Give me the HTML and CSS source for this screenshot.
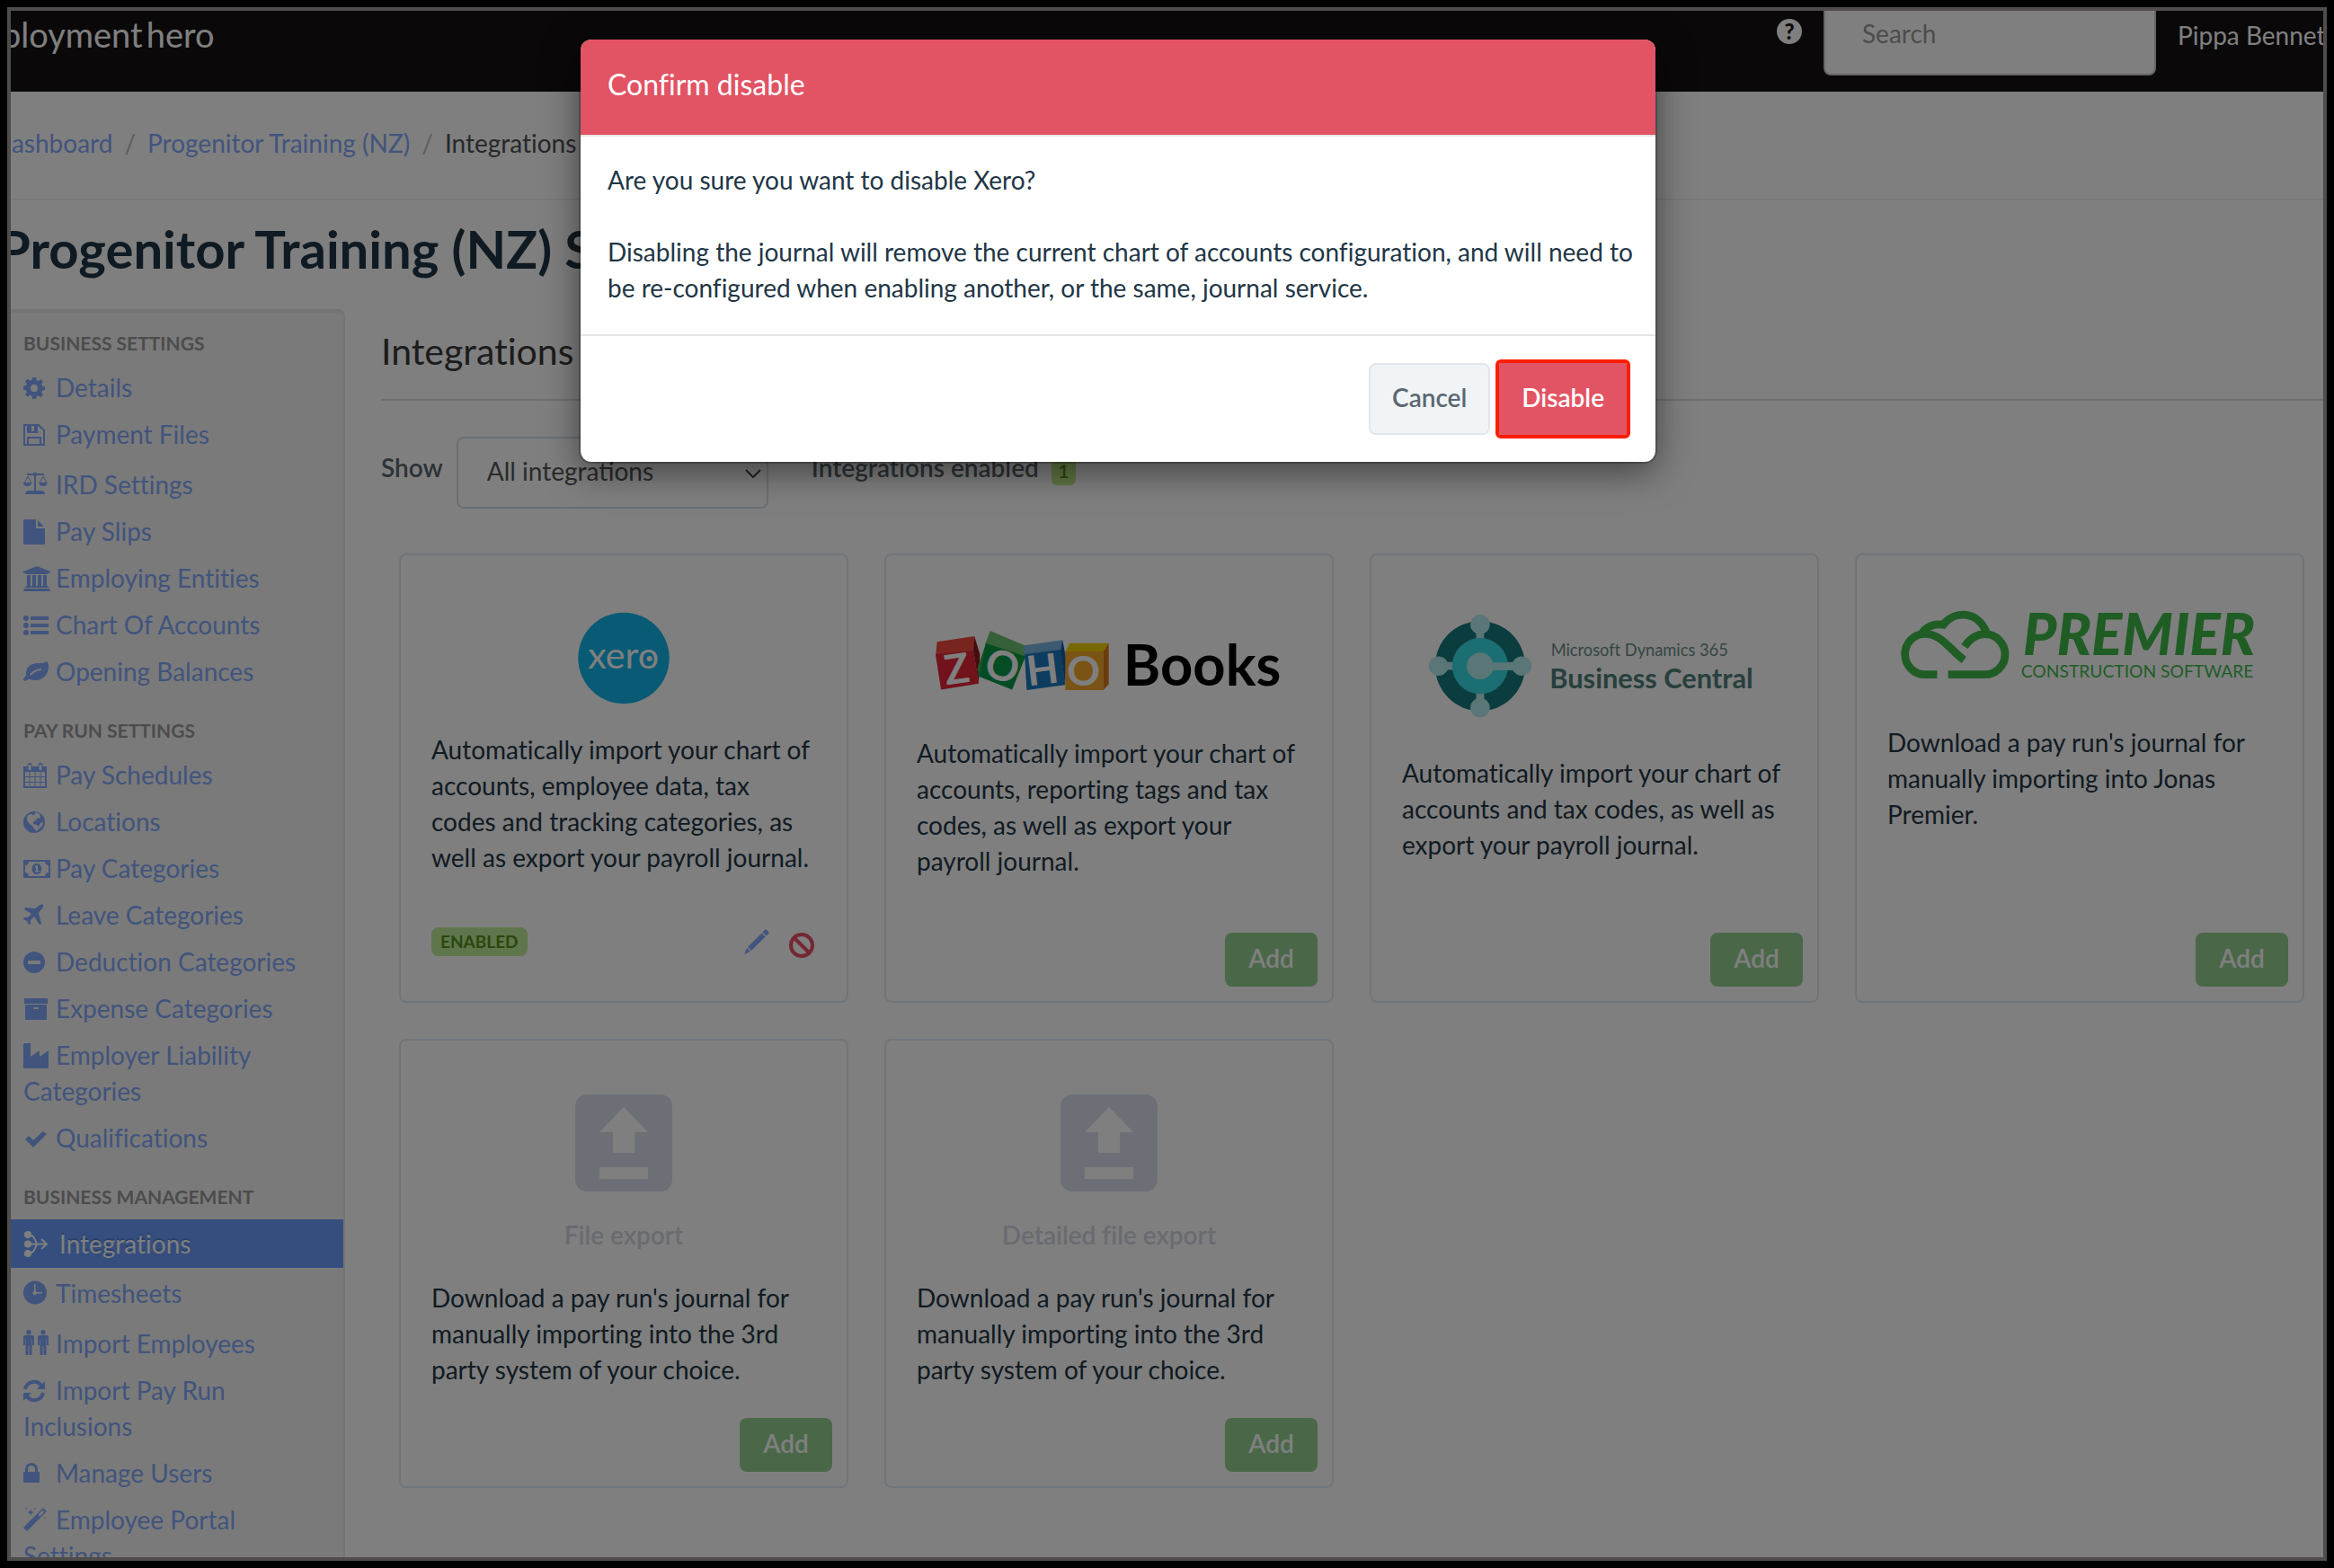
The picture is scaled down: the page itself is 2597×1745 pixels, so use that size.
FILE: index.html
```html
<!DOCTYPE html>
<html lang="en">
<head>
    <meta charset="utf-8">
    <title>Integrations</title>
    <link rel="stylesheet" href="styles.css">
</head>
<body>
<div class="frame">

    <header class="navbar">
        <a class="brand" href="#"><span>ployment</span><span>hero</span></a>
        <div class="nav-right">
            <a href="#" class="help" aria-label="Help">?</a>
            <input type="text" class="search" placeholder="Search" aria-label="Search">
            <a href="#" class="user">Pippa Bennett</a>
        </div>
    </header>

    <nav class="breadcrumb">
        <a href="#">Dashboard</a><span class="sep">/</span>
        <a href="#">Progenitor Training (NZ)</a><span class="sep">/</span>
        <span>Integrations</span>
    </nav>

    <h1>Progenitor Training (NZ) Settings</h1>

    <div class="columns">
        <!-- Settings menu -->
        <nav class="sidebar">
            <h3>Business Settings</h3>
            <ul>
                <li><a href="#"><svg class="icon" viewBox="0 0 30 30"><path fill-rule="evenodd" d="M10 4h4l.6 3.2 2 .9 2.8-1.9 2.6 2.6-1.8 2.7.8 2.1 3 .5v4l-3 .6-.8 2 1.8 2.7-2.6 2.6-2.8-1.8-2 .8L14 28h-4l-.6-3.5-2-.8-2.8 1.8L2 22.900l1.800-2.700-.8-2L0 17.600v-4l3-.5.8-2.100L2 8.300l2.600-2.600 2.800 1.900 2-.9zM12 11.800a4.200 4.200 0 1 0 0 8.400 4.200 4.200 0 0 0 0-8.400z"/></svg>Details</a></li>
                <li><a href="#"><svg class="icon" viewBox="0 0 30 30"><g fill="none" stroke="currentColor" stroke-width="2"><path d="M1 5h16l6 6v16H1z"/><path d="M5 27v-8h14v8M5 5v8h10V5"/></g><path d="M5 5h4v8H5zM12 6h2v6h-2z"/></svg>Payment Files</a></li>
                <li class="tall"><a href="#"><svg class="icon" viewBox="0 0 30 30"><g fill="none" stroke="currentColor"><path stroke-width="2" d="M4 4h19M13 4v20"/><path d="M1 14l4-8 4 8M18 14l4-8 4 8"/></g><circle cx="13" cy="4" r="2.300"/><path d="M0 13h9c0 3-2 4-4.500 4S0 16 0 13zM17.500 13h9c0 3-2 4-4.500 4s-4.500-1-4.500-4zM2 26c0-3 2-4 4-4h14c2 0 4 1 4 4z"/></svg>IRD Settings</a></li>
                <li><a href="#"><svg class="icon" viewBox="0 0 30 30"><path d="M1 2h13v10h10v17a1 1 0 0 1-1 1H1a1 1 0 0 1-1-1V3a1 1 0 0 1 1-1zM16 3l7 7h-7z"/></svg>Pay Slips</a></li>
                <li><a href="#"><svg class="icon" viewBox="0 0 30 30"><path d="M15 2l15 6v2H27v1H3v-1H0V8zM4 12h4v12h2V12h4v12h2V12h4v12h2V12h4v12h1l1 2H2l1-2h1zM1 27h28l1 3H0z"/></svg>Employing Entities</a></li>
                <li><a href="#"><svg class="icon" viewBox="0 0 30 30"><circle cx="3" cy="8" r="3"/><circle cx="3" cy="16" r="3"/><circle cx="3" cy="24" r="3"/><path d="M8 6h20v4H8zM8 14h20v4H8zM8 22h20v4H8z"/></svg>Chart Of Accounts</a></li>
                <li><a href="#"><svg class="icon" viewBox="0 0 30 30"><path fill-rule="evenodd" d="M26 4c2 2 2 4 2 6 0 10-8 16-16 15-3 0-5-2-6-1l-4 2-2-1c0-3 3-4 3-6C2 10 9 6 16 6c4 0 8 0 10-2zM20 12c-6 0-10 3-13 7l1 1c3-3 7-6 12-6z"/></svg>Opening Balances</a></li>
            </ul>

            <h3>Pay Run Settings</h3>
            <ul>
                <li><a href="#"><svg class="icon" viewBox="0 0 30 30"><path fill="none" stroke="currentColor" stroke-width="2" d="M1 7h24v22H1z"/><path d="M0 6h26v6H0z"/><path stroke="currentColor" d="M7 12v17M13 12v17M19 12v17M1 17.500h24M1 23.500h24"/><path stroke="currentColor" stroke-width="5" stroke-linecap="round" d="M7 4.500v3M19 4.500v3"/><path class="gap-line" d="M7 4v6M19 4v6"/></svg>Pay Schedules</a></li>
                <li><a href="#"><svg class="icon" viewBox="0 0 30 30"><path fill-rule="evenodd" d="M12 4a12 12 0 1 0 0 24 12 12 0 0 0 0-24zM5 8l3-1 3 1 2-1 0-2 4 1 2 3-1 3-2-1-2 3-3 2 0 2 4 1 2 3-1 3-1 1-3-3-2-3-3-2-3-4 0-3zM20 16l2 0-1 4-4 4-1 0 1-4z"/></svg>Locations</a></li>
                <li><a href="#"><svg class="icon" viewBox="0 0 30 30"><path fill-rule="evenodd" d="M0 6h30v20H0zM6 8c0 2-2 4-4 4v8c2 0 4 2 4 4h18c0-2 2-4 4-4v-8c-2 0-4-2-4-4zM15 10c7 0 7 12 0 12s-7-12 0-12zM13 13v1.500h1V18h-1v1.500h4.500V18H16v-6h-1.500z"/></svg>Pay Categories</a></li>
                <li><a href="#"><svg class="icon" viewBox="0 0 30 30"><path d="M22 4c1 2-1 4-3 6l-2 3 3 12-2 1-6-9-4 4v4l-2 1-2-4-4-2 1-2h4l4-4-8-5 1-2 11 1 3-2c2-2 4-3 6-2z"/></svg>Leave Categories</a></li>
                <li><a href="#"><svg class="icon" viewBox="0 0 30 30"><path fill-rule="evenodd" d="M12 4a12 12 0 1 0 0 24 12 12 0 0 0 0-24zM6 14h12a1 1 0 0 1 1 1v2a1 1 0 0 1-1 1H6a1 1 0 0 1-1-1v-2a1 1 0 0 1 1-1z"/></svg>Deduction Categories</a></li>
                <li><a href="#"><svg class="icon" viewBox="0 0 30 30"><path fill-rule="evenodd" d="M1 4h26v6H1zM2 11h24v17H2zM12 14a1 1 0 0 0 0 2h4a1 1 0 0 0 0-2z"/></svg>Expense Categories</a></li>
                <li><a href="#"><svg class="icon" viewBox="0 0 30 30"><path d="M1 2h7v15l10-7v7l10-7v20H0V3z"/></svg>Employer Liability Categories</a></li>
                <li><a href="#"><svg class="icon" viewBox="0 0 30 30"><path d="M2 17l4-4 5 5L22 8l4 3-15 15z"/></svg>Qualifications</a></li>
            </ul>

            <h3>Business Management</h3>
            <ul>
                <li class="active"><a href="#"><svg class="icon" viewBox="0 0 30 30"><circle cx="5" cy="5" r="4"/><circle cx="5" cy="15.500" r="4"/><circle cx="5" cy="26" r="4"/><path fill="none" stroke="currentColor" stroke-width="2" d="M5 5c7 0 8 6 10 10.500C13 20 12 26 5 26M5 15.500h20M20 10l6 5.500-6 5.500"/></svg>Integrations</a></li>
                <li><a href="#"><svg class="icon" viewBox="0 0 30 30"><path fill-rule="evenodd" d="M13 1.500a13 13 0 1 0 0 26 13 13 0 0 0 0-26zM12 5v7.500a2.400 2.400 0 1 0 3 3h6v-1.500h-6l-1.500-1.500V5z"/></svg>Timesheets</a></li>
                <li class="tall"><a href="#"><svg class="icon" viewBox="0 0 30 30"><g id="man"><circle cx="6" cy="2.700" r="2.600"/><path d="M2 6h8a2 2 0 0 1 2 2v9h-2v-7H9.500v18h-3V18h-1v10h-3V10H2v7H0V8a2 2 0 0 1 2-2z"/></g><use href="#man" x="16"/></svg>Import Employees</a></li>
                <li><a href="#"><svg class="icon" viewBox="0 0 30 30"><path fill="none" stroke="currentColor" stroke-width="4" d="M2 14c2-9 13-11 18-4M22 18c-2 9-13 11-18 4"/><path d="M24 5v9h-9zM0 27v-9h9z"/></svg>Import Pay Run Inclusions</a></li>
                <li><a href="#"><svg class="icon" viewBox="0 0 30 30"><path fill="none" stroke="currentColor" stroke-width="3" d="M3.500 16v-5a5.500 5.500 0 0 1 11 0v5"/><rect y="14" width="18" height="12" rx="1"/></svg>Manage Users</a></li>
                <li><a href="#"><svg class="icon" viewBox="0 0 30 30"><path fill-rule="evenodd" d="M22 2l4 4L4 28l-4-4zM21.500 4.500l-5 5 2 2 5-5zM8 3l1 3 3 1-3 1-1 3-1-3-3-1 3-1zM3 2l1 1-1 1-1-1zM13 2l1 1-1 1-1-1zM24 12l1 1-1 1-1-1z"/></svg>Employee Portal Settings</a></li>
            </ul>
        </nav>

        <main>
            <h2>Integrations</h2>

            <div class="filters">
                <label for="show">Show</label>
                <div class="select-wrap">
                    <select id="show">
                        <option>All integrations</option>
                    </select>
                    <svg class="chevron" viewBox="0 0 18 10"><path d="M1 1l8 8 8-8"/></svg>
                </div>
                <span class="count-label">Integrations enabled</span>
                <span class="count">1</span>
            </div>

            <div class="cards">
                <section class="card">
                    <svg class="logo" viewBox="148 231 1266 314" role="img" aria-label="Xero">
                        <circle cx="781" cy="392" r="150" fill="#13b5ea"/>
                        <text x="780" y="425" class="xero-text" text-anchor="middle">xero</text>
                        <circle cx="866" cy="394" r="9" fill="#fff"/>
                    </svg>
                    <p>Automatically import your chart of accounts, employee data, tax codes and tracking categories, as well as export your payroll journal.</p>
                    <div class="card-status">
                        <span class="enabled">ENABLED</span>
                        <a href="#" class="edit" aria-label="Edit"><svg viewBox="0 0 28 28"><path d="M0 28l3-7 4 4zM4 20L19.500 4.500l4 4L8 24zM20.500 3.500L24 0l4 4-3.500 3.500z"/></svg></a>
                        <a href="#" class="disable" aria-label="Disable"><svg viewBox="0 0 28 28"><circle cx="14" cy="14" r="12"/><path d="M5.500 5.500l17 17"/></svg></a>
                    </div>
                </section>

                <section class="card">
                    <svg class="logo" viewBox="148 231 1266 325" role="img" aria-label="Zoho Books">
                        <path fill="#f0483e" d="M215 338L338 320 337 372 210 386z"/>
                        <path fill="#e42537" d="M210 380L335 368 352 476 228 496z"/>
                        <path fill="#8c1a1e" d="M338 320L356 380 352 476 335 370z"/>
                        <path fill="#6cc070" d="M390 302L508 352 503 390 374 345z"/>
                        <path fill="#4aa850" d="M390 302L376 346 352 452 348 425z"/>
                        <path fill="#089949" d="M375 343L506 386 462 496 352 452z"/>
                        <path fill="#78b4e4" d="M500 351L628 332 622 366 503 380z"/>
                        <path fill="#1c78be" d="M503 379L623 364 636 480 510 497z"/>
                        <path fill="#145a9c" d="M628 332L641 400 636 482 622 364z"/>
                        <path fill="#f0d000" d="M652 343H780L762 372H637z"/>
                        <path fill="#f5a828" d="M637 370H762V497H637z"/>
                        <path fill="#d87818" d="M780 343V478L762 497V371z"/>
                        <text class="zoho-text" x="280" y="476" text-anchor="middle" transform="rotate(-8 280 428)">Z</text>
                        <text class="zoho-text" x="430" y="466" text-anchor="middle" transform="rotate(18 430 418)">O</text>
                        <text class="zoho-text" x="562" y="478" text-anchor="middle" transform="rotate(-7 562 430)">H</text>
                        <text class="zoho-text" x="697" y="482" text-anchor="middle">O</text>
                        <text class="books-text" x="828" y="482">Books</text>
                    </svg>
                    <p>Automatically import your chart of accounts, reporting tags and tax codes, as well as export your payroll journal.</p>
                    <button type="button" class="add">Add</button>
                </section>

                <section class="card">
                    <svg class="logo" viewBox="148 231 1266 390" role="img" aria-label="Microsoft Dynamics 365 Business Central">
                        <circle cx="405" cy="418" r="148" fill="#16787c"/>
                        <g stroke="#b4ecec" stroke-width="26"><path d="M405 280V556M268 418H542"/></g>
                        <circle cx="405" cy="418" r="92" fill="#36dce4"/>
                        <path stroke="#b4ecec" stroke-width="26" d="M405 419H542"/>
                        <g fill="#b4ecec">
                            <circle cx="405" cy="418" r="44"/>
                            <circle cx="405" cy="281" r="32"/>
                            <circle cx="405" cy="555" r="32"/>
                            <circle cx="268" cy="418" r="32"/>
                            <circle cx="542" cy="418" r="32"/>
                        </g>
                        <text class="dyn-small" x="638" y="386">Microsoft Dynamics 365</text>
                        <text class="dyn-big" x="634" y="490">Business Central</text>
                    </svg>
                    <p>Automatically import your chart of accounts and tax codes, as well as export your payroll journal.</p>
                    <button type="button" class="add">Add</button>
                </section>

                <section class="card">
                    <svg class="logo" viewBox="148 231 1266 290" role="img" aria-label="Premier Construction Software">
                        <g fill="none" stroke="#3eba4a" stroke-width="26">
                            <path d="M312 446H272A66 67 0 0 1 272 312C325 312 350 360 400 398"/>
                            <path d="M262 310C275 290 300 277 332 282C372 232 448 238 474 308"/>
                            <path d="M402 354C420 328 445 313 469 313A66 66 0 0 1 469 446H348"/>
                        </g>
                        <text class="premier" x="594" y="382">PREMIER</text>
                        <text class="premier-sub" x="588" y="455">CONSTRUCTION SOFTWARE</text>
                    </svg>
                    <p>Download a pay run's journal for manually importing into Jonas Premier.</p>
                    <button type="button" class="add">Add</button>
                </section>

                <section class="card">
                    <svg class="export-icon" viewBox="0 0 108 108"><path fill-rule="evenodd" d="M13 0h82a13 13 0 0 1 13 13v82a13 13 0 0 1-13 13H13A13 13 0 0 1 0 95V13A13 13 0 0 1 13 0zM54 14L27 42h15v23h24V42h15zM27 81v13h54V81z"/></svg>
                    <h4>File export</h4>
                    <p>Download a pay run's journal for manually importing into the 3rd party system of your choice.</p>
                    <button type="button" class="add">Add</button>
                </section>

                <section class="card">
                    <svg class="export-icon" viewBox="0 0 108 108"><path fill-rule="evenodd" d="M13 0h82a13 13 0 0 1 13 13v82a13 13 0 0 1-13 13H13A13 13 0 0 1 0 95V13A13 13 0 0 1 13 0zM54 14L27 42h15v23h24V42h15zM27 81v13h54V81z"/></svg>
                    <h4>Detailed file export</h4>
                    <p>Download a pay run's journal for manually importing into the 3rd party system of your choice.</p>
                    <button type="button" class="add">Add</button>
                </section>
            </div>
        </main>
    </div>

    <!-- Confirm modal -->
    <div class="backdrop">
        <div class="modal" role="dialog" aria-labelledby="modalTitle">
            <div class="modal-header" id="modalTitle">Confirm disable</div>
            <div class="modal-body">
                <p>Are you sure you want to disable Xero?</p>
                <p>Disabling the journal will remove the current chart of accounts configuration, and will need to be re-configured when enabling another, or the same, journal service.</p>
            </div>
            <div class="modal-footer">
                <button type="button" class="btn-cancel">Cancel</button>
                <button type="button" class="btn-disable">Disable</button>
            </div>
        </div>
    </div>

</div>
</body>
</html>
```
FILE: styles.css
```css
* {box-sizing: border-box;}
body {margin: 0; padding: 8px; height: 100vh; background: #000; color: #223646; font-family: Lato, sans-serif; font-size: 28px; line-height: 40px; font-variant-ligatures: none;}
a {color: #82a8fa; text-decoration: none;}
button, input, select {font-family: inherit; font-size: inherit;}
p, h1, h2, h3, h4, ul {margin: 0; padding: 0;}
ul {list-style: none;}

.frame {position: relative; height: 100%; overflow: hidden; border: 4px solid #504c4c; background: #fff;}

/* Top bar */
.navbar {display: flex; justify-content: space-between; height: 90px; background: #141012;}
.brand {display: flex; gap: 4px; margin-left: -10px; padding-top: 6px; color: #fff; font-size: 38px;}
.nav-right {display: flex; align-items: flex-start;}
.help {width: 28px; height: 28px; margin: 9px 24px 0 0; border-radius: 50%; background: #fff; color: #141012; font-size: 24px; font-weight: 900; line-height: 28px; text-align: center;}
.search {width: 370px; height: 80px; margin-top: -8px; padding: 0 41px 14px; border: 2px solid #ccc; border-radius: 8px; background: #fff;}
.search::placeholder {color: #999; opacity: 1;}
.user {width: 186px; padding: 7px 0 0 24px; color: #fff; white-space: nowrap;}

.breadcrumb {display: flex; gap: 8px; margin-left: -20px; height: 121px; padding-top: 37px; border-bottom: 2px solid #f2f2f2; color: #4c5157;}
.breadcrumb .sep {padding: 0 5px; color: #bbb;}
h1 {margin: 14px 0 27px -14px; color: #1e3444; font-size: 58px; font-weight: 700; line-height: 80px;}

.columns {display: flex; align-items: flex-start;}

/* Sidebar */
.sidebar {flex: 0 0 372px; padding-top: 16px; border: 2px solid #e8e8e8; border-left: 0; border-radius: 0 8px 8px 0; background: #f5f5f5; box-shadow: inset 0 2px 2px rgba(0,0,0,.06);}
.sidebar h3 {padding: 0 14px 3px; color: #999; font-size: 21px; font-weight: 700; line-height: 40px; text-transform: uppercase;}
.sidebar ul + h3 {padding-top: 20px;}
.sidebar li a {display: block; padding: 6px 24px 6px 14px;}
.sidebar .tall a {padding-top: 10px;}
.sidebar .active {margin: 2px 0;}
.sidebar .active a {padding-top: 7px; padding-bottom: 7px; background: #6a9cfc; color: #fff; text-shadow: 0 -2px 0 rgba(0,0,0,.2);}
.sidebar .active .icon {margin-right: 10px;}
.icon {width: 30px; height: 30px; margin-right: 6px; vertical-align: -4px; fill: currentColor;}
.gap-line {stroke: #f5f5f5; stroke-width: 3;}

/* Content */
main {flex: 1; padding: 17px 0 0 40px;}
h2 {padding-bottom: 23px; border-bottom: 2px solid #dedede; color: #383838; font-size: 41px; font-weight: 400; line-height: 60px;}
.filters {display: flex; align-items: flex-start; margin-top: 40px; color: #58666f; font-weight: 600;}
.filters label, .count-label {padding-top: 14px;}
.select-wrap {position: relative; width: 347px; margin: 0 48px 0 15px;}
.select-wrap select {appearance: none; width: 100%; height: 80px; padding: 0 32px 4px; border: 2px solid #d4dfe8; border-radius: 8px; background: #fff; color: #555;}
.chevron {position: absolute; right: 8px; top: 36px; width: 18px; height: 10px; fill: none; stroke: #444; stroke-width: 2;}
.count {margin: 22px 0 0 14px; width: 27px; height: 32px; border-radius: 6px; background: #bfea86; color: #54901a; font-size: 21px; line-height: 32px; text-align: center;}

.cards {display: grid; grid-template-columns: repeat(4, 1fr); gap: 40px; padding: 50px 21px 40px 20px;}
.card {display: flex; flex-direction: column; min-height: 500px; padding: 60px 16px 16px 34px; border: 2px solid #e0eaf4; border-radius: 8px;}
.card p {margin-right: 18px;}
.logo {width: 428px; margin-bottom: 30px;}
.export-icon {width: 108px; margin-bottom: 28px; margin-right: 18px; align-self: center; fill: #d8e0ec;}
.card h4 {margin: 0 18px 30px 0; color: #d2d6e2; font-size: 28px; font-weight: 600; text-align: center;}
.add {align-self: flex-end; margin-top: auto; width: 103px; height: 60px; padding: 0 0 4px; border: 0; border-radius: 8px; background: #94d090; color: #fff; font-weight: 600;}
.card-status {display: flex; align-items: flex-start; margin: auto 20px 32px 0;}
.enabled {margin-right: auto; padding: 0 10px; border-radius: 8px; background: #bfea96; color: #54901a; font-size: 19px; font-weight: 700; line-height: 32px;}
.card-status svg {display: block; width: 28px; height: 28px;}
.edit {margin: 2px 22px 0 0; fill: #82a8fa;}
.disable {margin-top: 6px;}
.disable svg {fill: none; stroke: #ea4e66; stroke-width: 4;}

/* Logo lettering */
.xero-text {fill: #fff; font-size: 122px; font-weight: 400;}
.zoho-text {fill: #fff; font-size: 136px; font-weight: 700;}
.books-text {fill: #000; font-size: 187px; font-weight: 700;}
.dyn-small {fill: #6a8a88; font-size: 54px;}
.dyn-big {fill: #4e807a; font-size: 91px; font-weight: 700;}
.premier {fill: #3eba4a; font-size: 189px; font-weight: 900; font-style: italic;}
.premier-sub {fill: #3eba4a; font-size: 57px;}

/* Modal */
.backdrop {position: absolute; inset: 0; display: flex; justify-content: center; align-items: flex-start; padding: 32px 109px 0 0; background: rgba(0,0,0,.5);}
.modal {width: 1196px; border-radius: 12px; background: #fff; box-shadow: 0 0 0 2px rgba(0,0,0,.2), 0 10px 40px rgba(0,0,0,.5);}
.modal-header {padding: 30px 30px 36px; border-bottom: 2px solid #e5e5e5; border-radius: 12px 12px 0 0; background: #e25364; color: #fff; font-size: 32px;}
.modal-body {padding: 28px 20px 32px 30px;}
.modal-body p + p {margin-top: 40px;}
.modal-footer {display: flex; justify-content: flex-end; gap: 10px; padding: 30px 32px 30px 30px; border-top: 2px solid #e5e5e5;}
.modal-footer button {height: 80px; padding: 0 24px 4px; border: 2px solid #e1e6ec; border-radius: 8px; background: #f1f4f7; color: #5c6770; font-weight: 600;}
.modal-footer .btn-disable {padding: 0 23px 4px; border-color: #e25364; background: #e25364; color: #fff; outline: 4px solid #fb1e02; border-radius: 2px;}
```
